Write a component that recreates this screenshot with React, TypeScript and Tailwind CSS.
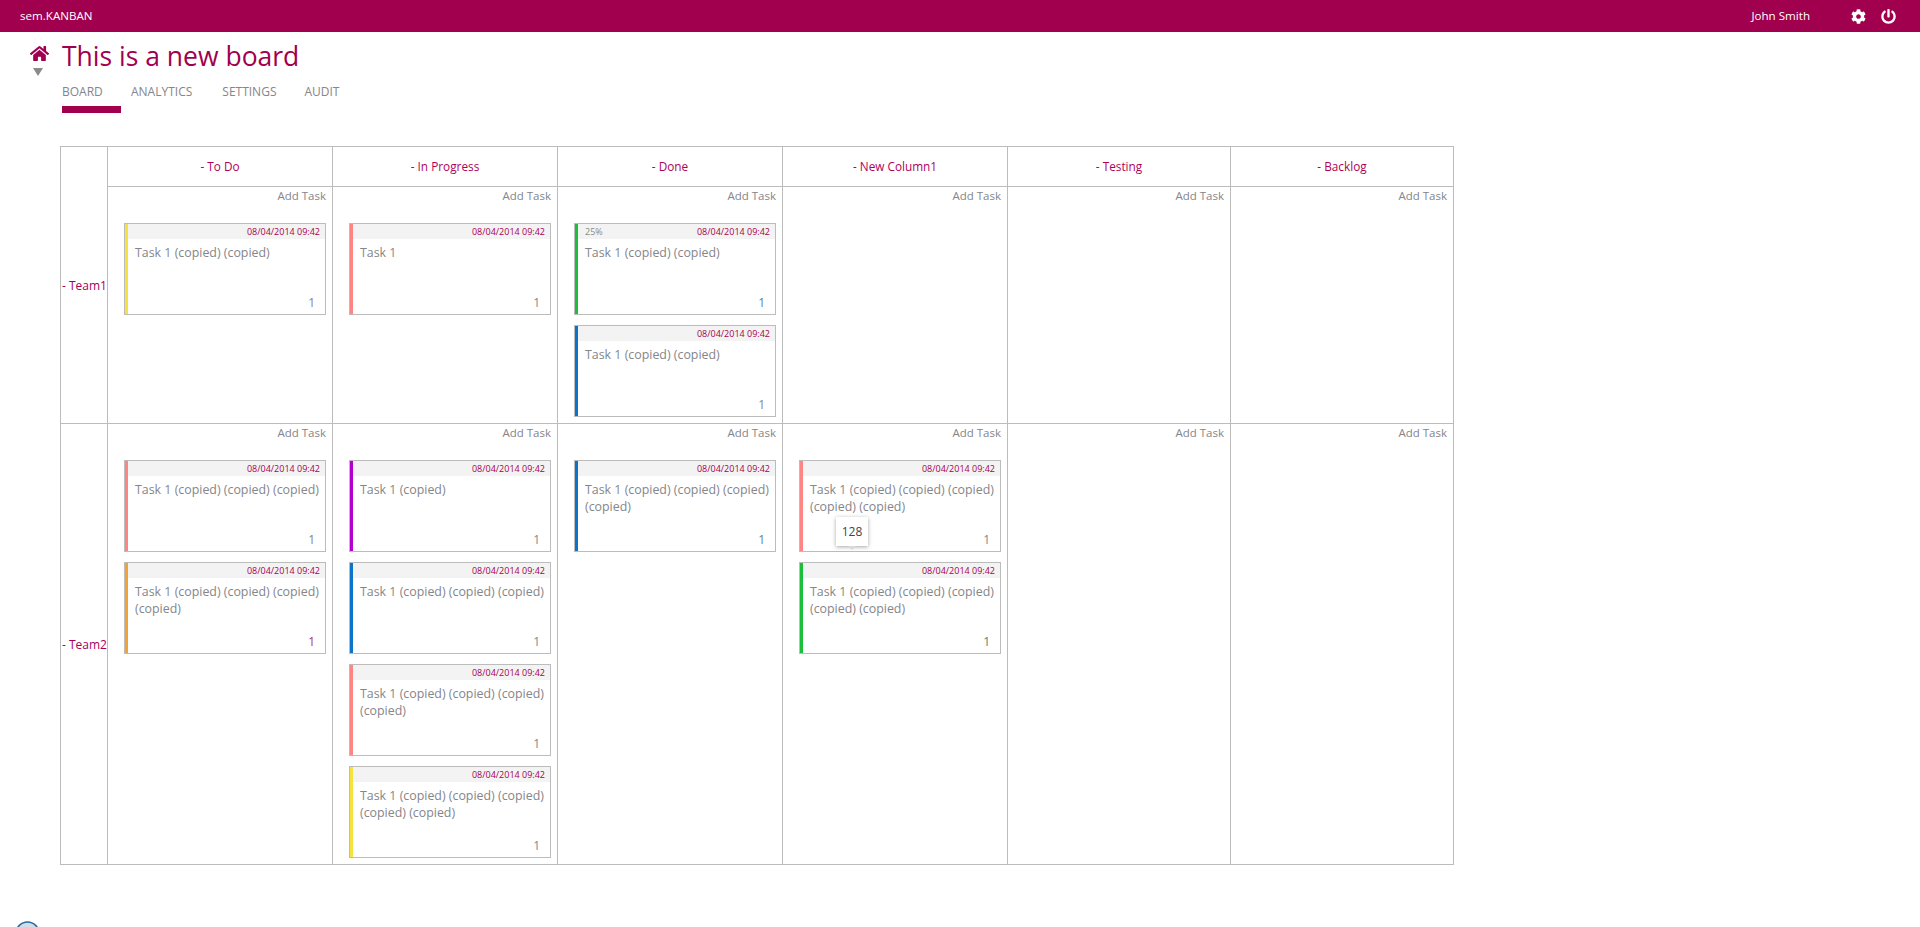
import { FaCog, FaHome, FaPowerOff } from 'react-icons/fa';

type Task = {
  accent: string;
  lines: string;
  pct?: string;
  numClass?: string;
};

const columns = ['To Do', 'In Progress', 'Done', 'New Column1', 'Testing', 'Backlog'];

const c1 = 'Task 1 (copied)';
const c2 = 'Task 1 (copied) (copied)';
const c3 = 'Task 1 (copied) (copied) (copied)';
const c4 = 'Task 1 (copied) (copied) (copied) (copied)';
const c5 = 'Task 1 (copied) (copied) (copied) (copied) (copied)';

const team1: Task[][] = [
  [{ accent: 'bg-[#f5e23c]', lines: c2 }],
  [{ accent: 'bg-[#ff8585]', lines: 'Task 1' }],
  [
    { accent: 'bg-[#1cbf3c]', lines: c2, pct: '25%', numClass: 'text-[#5f8596]' },
    { accent: 'bg-[#0b74c8]', lines: c2 },
  ],
  [],
  [],
  [],
];

const team2: Task[][] = [
  [
    { accent: 'bg-[#ff8585]', lines: c3 },
    { accent: 'bg-[#f5a234]', lines: c4, numClass: 'text-[#a8336e]' },
  ],
  [
    { accent: 'bg-[#b400cf]', lines: c1 },
    { accent: 'bg-[#0b74c8]', lines: c3 },
    { accent: 'bg-[#ff8585]', lines: c4 },
    { accent: 'bg-[#f5e23c]', lines: c5 },
  ],
  [{ accent: 'bg-[#0b74c8]', lines: c4, numClass: 'text-[#5f8596]' }],
  [
    { accent: 'bg-[#ff8585]', lines: c5 },
    { accent: 'bg-[#1cbf3c]', lines: c5, numClass: 'text-[#4f8a70]' },
  ],
  [],
  [],
];

function Card({ task, tip }: { task: Task; tip?: boolean }) {
  return (
    <div className="relative flex h-[92px] w-[202px] border border-[#bcbcbc] bg-white">
      <div className={`w-[3px] shrink-0 ${task.accent}`} />
      <div className="flex min-w-0 flex-1 flex-col">
        <div className="flex h-[15px] items-center justify-between bg-[#f3f3f3] pl-[7px] pr-[5px] text-[9px] leading-none">
          <span className="text-[#8a8a8a]">{task.pct}</span>
          <span className="text-[#a8004f]">08/04/2014 09:42</span>
        </div>
        <div className="pl-[7px] pr-[2px] pt-[5px] text-[12.4px] leading-[17px] text-[#85858a]">{task.lines}</div>
        <div className={`mt-auto pb-[3px] pr-[10px] text-right text-[12px] leading-[17px] ${task.numClass ?? 'text-[#85858a]'}`}>1</div>
      </div>
      {tip && (
        <div className="absolute left-[36px] top-[56px] flex h-[29px] w-[32px] items-center justify-center bg-white text-[12px] text-[#444] shadow-[0_1px_4px_rgba(0,0,0,0.35)]">
          128
          <div className="absolute -bottom-[4px] left-[12px] h-0 w-0 border-x-[4px] border-t-[4px] border-x-transparent border-t-[#d8d8d8]" />
        </div>
      )}
    </div>
  );
}

function Cell({ tasks, tipIndex }: { tasks: Task[]; tipIndex?: number }) {
  return (
    <td className="border border-[#bcbcbc] p-0 align-top">
      <div className="pr-[6px] text-right text-[11.5px] leading-[17px] text-[#85858a]">Add Task</div>
      <div className="flex flex-col gap-[10px] pl-[16px] pt-[19px]">
        {tasks.map((task, i) => (
          <Card key={i} task={task} tip={i === tipIndex} />
        ))}
      </div>
    </td>
  );
}

export default function App() {
  return (
    <div className="h-[927px] overflow-hidden bg-white font-['Open_Sans','Noto_Sans',sans-serif]">
      <header className="flex h-[32px] items-center bg-[#a1004e] pl-[20px] text-[11.6px] text-white">
        <span>sem.KANBAN</span>
        <span className="ml-auto mr-[41px]">John Smith</span>
        <FaCog className="mr-[15px] h-[15px] w-[15px]" />
        <FaPowerOff className="mr-[24px] h-[15px] w-[15px]" />
      </header>

      <div className="flex pl-[30px] pt-[8px]">
        <div className="flex w-[32px] flex-col items-start pt-[4px]">
          <FaHome className="h-[19px] w-[19px] text-[#a1004e]" />
          <div className="ml-[3px] mt-[5px] h-0 w-0 border-x-[5.5px] border-t-[8px] border-x-transparent border-t-[#8a8a8a]" />
        </div>
        <div>
          <h1 className="text-[26.5px] font-normal leading-[32px] text-[#a1004e]">This is a new board</h1>
          <nav className="mt-[11px] flex text-[12px] leading-[17px] text-[#85858a]">
            <div className="w-[69px]">
              <div>BOARD</div>
              <div className="mt-[6px] h-[7px] w-[59px] bg-[#a1004e]" />
            </div>
            <div className="mr-[30px]">ANALYTICS</div>
            <div className="mr-[28px]">SETTINGS</div>
            <div>AUDIT</div>
          </nav>
        </div>
      </div>

      <div className="pl-[60px] pt-[33px]">
        <table className="w-[1393px] table-fixed border-collapse border border-[#bcbcbc]">
          <colgroup>
            <col className="w-[47px]" />
            <col className="w-[225px]" />
            <col className="w-[225px]" />
            <col className="w-[225px]" />
            <col className="w-[225px]" />
            <col className="w-[223px]" />
            <col className="w-[223px]" />
          </colgroup>
          <tbody>
            <tr className="h-[40px]">
              <td rowSpan={2} className="border border-[#bcbcbc] p-0 pl-[1px] pt-[2px] text-[12px] text-[#a8005a]">- Team1</td>
              {columns.map((c) => (
                <td key={c} className="border border-[#bcbcbc] p-0 text-center text-[11.8px] text-[#b0005a]">- {c}</td>
              ))}
            </tr>
            <tr className="h-[237px]">
              {team1.map((tasks, i) => (
                <Cell key={i} tasks={tasks} />
              ))}
            </tr>
            <tr className="h-[441px]">
              <td className="border border-[#bcbcbc] p-0 pl-[1px] pt-[2px] text-[12px] text-[#a8005a]">- Team2</td>
              {team2.map((tasks, i) => (
                <Cell key={i} tasks={tasks} tipIndex={i === 3 ? 0 : undefined} />
              ))}
            </tr>
          </tbody>
        </table>
      </div>

      <div className="pl-[15px] pt-[56px]">
        <svg width="25" height="25" viewBox="0 0 25 25">
          <circle cx="12.5" cy="12.5" r="11.5" fill="#d3dde6" stroke="#2a6a9e" strokeWidth="1.5" />
        </svg>
      </div>
    </div>
  );
}
